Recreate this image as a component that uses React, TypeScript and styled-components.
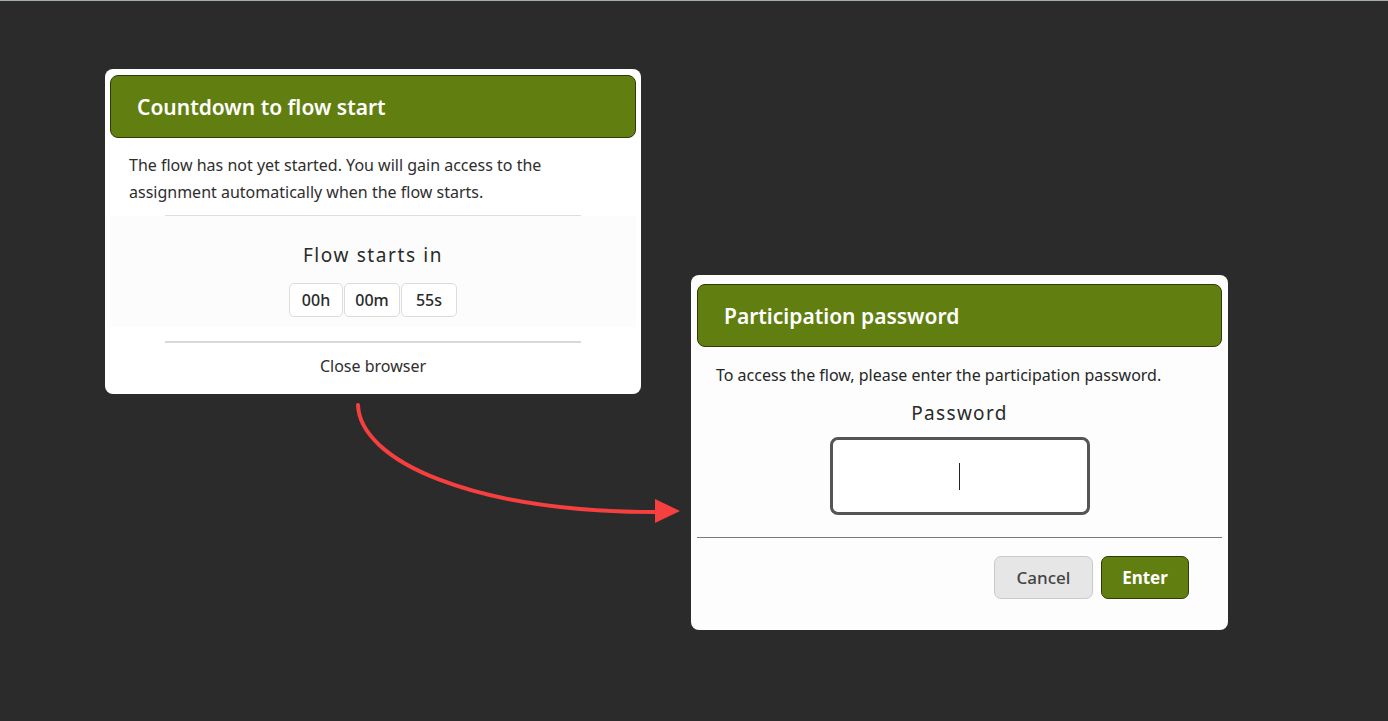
import React from "react";
import styled, { createGlobalStyle } from "styled-components";

const GlobalStyle = createGlobalStyle`
  html, body {
    margin: 0;
    padding: 0;
    background: #2b2b2b;
  }
  body {
    border-top: 1px solid #a3adb2;
    font-family: "Noto Sans", Roboto, Arial, sans-serif;
  }
  * { box-sizing: border-box; }
`;

const Page = styled.div`
  position: relative;
  min-height: 720px;
  display: flex;
  align-items: flex-start;
  gap: 50px;
  padding: 68px 0 0 105px;
`;

const Card = styled.section<{ $width: number; $offset?: number; $bg?: string; $pad: string }>`
  width: ${(p) => p.$width}px;
  margin-top: ${(p) => p.$offset ?? 0}px;
  background: ${(p) => p.$bg ?? "#ffffff"};
  border-radius: 8px;
  padding: ${(p) => p.$pad};
  display: flex;
  flex-direction: column;
  color: #2e2e2e;
`;

const Header = styled.header`
  height: 63px;
  display: flex;
  align-items: center;
  padding: 0 26px;
  background: #617e10;
  border: 1px solid #2f3c08;
  border-radius: 8px;
  color: #ffffff;
  font-size: 21px;
  font-weight: 600;
`;

const Body = styled.div<{ $top: number }>`
  padding: ${(p) => p.$top}px 19px 0;
  display: flex;
  flex-direction: column;
`;

const Paragraph = styled.p`
  margin: 0;
  font-size: 16px;
  line-height: 27px;
  color: #2e2e2e;
`;

const Divider = styled.hr<{ $top: number; $width?: string; $thick?: number; $color: string }>`
  margin: ${(p) => p.$top}px auto 0;
  width: ${(p) => p.$width ?? "100%"};
  border: none;
  height: ${(p) => p.$thick ?? 1}px;
  background: ${(p) => p.$color};
`;

const CountdownSection = styled.div`
  margin: 0 -19px;
  padding: 27px 0 10px;
  background: #fcfcfc;
  display: flex;
  flex-direction: column;
  align-items: center;
`;

const SectionTitle = styled.div<{ $spacing: number }>`
  font-size: 19px;
  line-height: 24px;
  font-weight: 400;
  letter-spacing: ${(p) => p.$spacing}px;
  color: #2a2a2a;
  text-align: center;
`;

const TimeRow = styled.div`
  margin-top: 16px;
  display: flex;
  gap: 1px;
`;

const TimeBox = styled.div<{ $w: number }>`
  width: ${(p) => p.$w}px;
  height: 34px;
  display: flex;
  align-items: center;
  justify-content: center;
  border: 1px solid #dcdcdc;
  border-radius: 5px;
  background: #ffffff;
  font-size: 16px;
  font-weight: 500;
  color: #2a2a2a;
`;

const CloseLink = styled.div`
  margin: 12px 0 17px;
  text-align: center;
  font-size: 16px;
  line-height: 22px;
  color: #2e2e2e;
`;

const InstructionText = styled.p`
  margin: 17px 0 0;
  padding-left: 19px;
  font-size: 16px;
  line-height: 22px;
  color: #262626;
`;

const FieldBlock = styled.div`
  margin-top: 15px;
  display: flex;
  flex-direction: column;
  align-items: center;
`;

const PasswordBox = styled.div`
  margin-top: 12px;
  width: 260px;
  height: 78px;
  border: 3px solid #555555;
  border-radius: 8px;
  background: #ffffff;
  display: flex;
  align-items: center;
  justify-content: center;
`;

const Caret = styled.span`
  width: 1px;
  height: 27px;
  background: #222222;
`;

const Actions = styled.div`
  margin: 18px 0 31px;
  padding-right: 33px;
  display: flex;
  justify-content: flex-end;
  gap: 8px;
`;

const Button = styled.button<{ $primary?: boolean; $w: number }>`
  width: ${(p) => p.$w}px;
  height: 43px;
  border-radius: 7px;
  font-family: inherit;
  font-size: 17px;
  font-weight: ${(p) => (p.$primary ? 700 : 500)};
  color: ${(p) => (p.$primary ? "#ffffff" : "#444444")};
  background: ${(p) => (p.$primary ? "#617e10" : "#e6e6e6")};
  border: 1px solid ${(p) => (p.$primary ? "#2f3c08" : "#c9c9c9")};
  cursor: pointer;
`;

const ArrowOverlay = styled.svg`
  position: absolute;
  left: 0;
  top: -1px;
  width: 1388px;
  height: 721px;
  pointer-events: none;
`;

export default function App() {
  return (
    <>
      <GlobalStyle />
      <Page>
        <Card $width={536} $pad="6px 5px 0">
          <Header>Countdown to flow start</Header>
          <Body $top={14}>
            <Paragraph>
              The flow has not yet started. You will gain access to the
              assignment automatically when the flow starts.
            </Paragraph>
            <Divider $top={9} $width="416px" $color="#dedede" />
            <CountdownSection>
              <SectionTitle $spacing={1.6}>Flow starts in</SectionTitle>
              <TimeRow>
                <TimeBox $w={54}>00h</TimeBox>
                <TimeBox $w={56}>00m</TimeBox>
                <TimeBox $w={56}>55s</TimeBox>
              </TimeRow>
            </CountdownSection>
            <Divider $top={14} $width="416px" $thick={2} $color="#d9d9d9" />
            <CloseLink>Close browser</CloseLink>
          </Body>
        </Card>
        <Card $width={537} $offset={206} $bg="#fcfdfc" $pad="9px 6px 0">
          <Header>Participation password</Header>
          <InstructionText>
            To access the flow, please enter the participation password.
          </InstructionText>
          <FieldBlock>
            <SectionTitle $spacing={1.3}>Password</SectionTitle>
            <PasswordBox>
              <Caret />
            </PasswordBox>
          </FieldBlock>
          <Divider $top={22} $color="#7a7a7a" />
          <Actions>
            <Button $w={99}>Cancel</Button>
            <Button $w={88} $primary>
              Enter
            </Button>
          </Actions>
        </Card>
        <ArrowOverlay viewBox="0 0 1388 721">
          <path
            d="M358 405 C 360 460, 470 512, 657 512"
            fill="none"
            stroke="#f63f3f"
            strokeWidth="4"
            strokeLinecap="round"
          />
          <polygon points="655,499 680,511 655,523" fill="#f63f3f" />
        </ArrowOverlay>
      </Page>
    </>
  );
}
